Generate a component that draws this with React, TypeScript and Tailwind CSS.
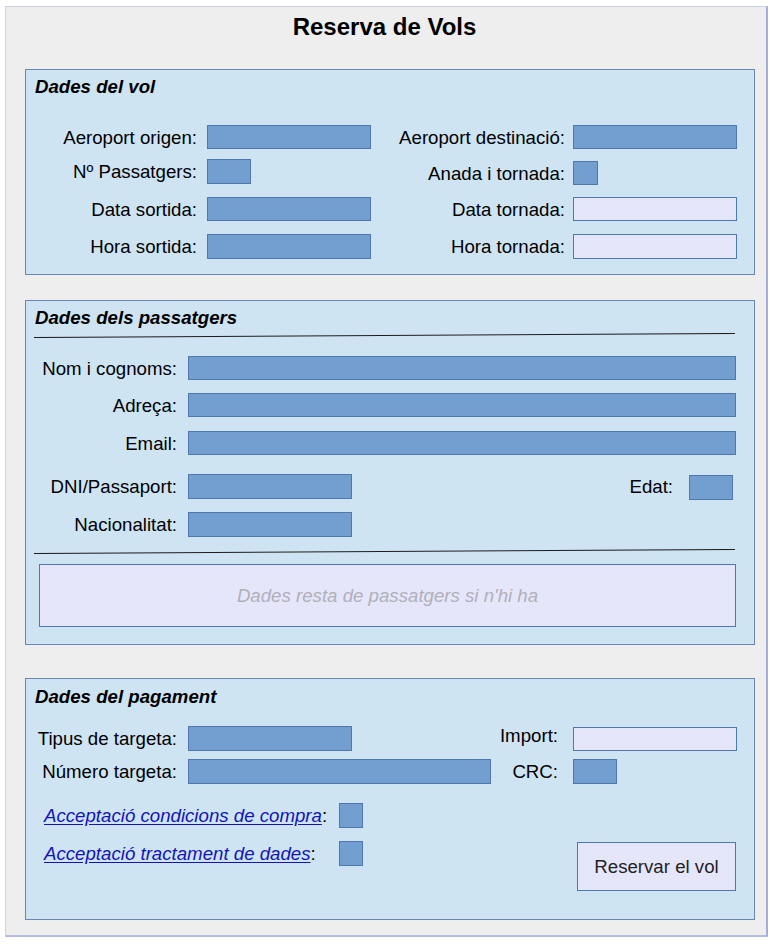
import React from 'react'

const Field = ({ w, h = 24, light = false }: { w: number; h?: number; light?: boolean }) => (
  <div
    className={`shrink-0 border border-[#4f77b0] ${light ? 'bg-[#e6e6fb]' : 'bg-[#729fcf]'}`}
    style={{ width: w, height: h }}
  />
)

const Rule = () => (
  <svg width="701" height="5" className="block ml-[8px]">
    <line x1="0" y1="4.5" x2="701" y2="0.5" stroke="#1e1e1e" strokeWidth="1.1" />
  </svg>
)

function App() {
  return (
    <div className="w-[771px] h-[946px] bg-white pt-[6px] pl-[5px] font-['Liberation_Sans',Arial,sans-serif] text-black text-[18.67px] leading-[21px]">
      <div className="w-[763px] h-[931px] bg-[#eeeeee] border-l border-t border-[#cdd2e3] border-r-2 border-b-2 border-r-[#a5aed8] border-b-[#b4bbdc] pl-[19px] pt-[6px]">
        <h1 className="w-[719px] text-center text-[24px] leading-[28px] font-bold">Reserva de Vols</h1>

        {/* dades del vol */}
        <div className="mt-[28px] w-[730px] h-[206px] bg-[#cfe4f3] border border-[#6a87b3] pt-[6px]">
          <h2 className="ml-[9px] font-bold italic">Dades del vol</h2>
          <div className="flex mt-[28px]">
            <div className="w-[345px] flex flex-col">
              <div className="flex items-center h-[24px]">
                <span className="w-[171px] text-right">Aeroport origen:</span>
                <div className="ml-[10px]"><Field w={164} /></div>
              </div>
              <div className="flex items-center h-[25px] mt-[10px]">
                <span className="w-[171px] text-right">Nº Passatgers:</span>
                <div className="ml-[10px]"><Field w={44} h={25} /></div>
              </div>
              <div className="flex items-center h-[24px] mt-[13px]">
                <span className="w-[171px] text-right">Data sortida:</span>
                <div className="ml-[10px]"><Field w={164} /></div>
              </div>
              <div className="flex items-center h-[25px] mt-[13px]">
                <span className="w-[171px] text-right">Hora sortida:</span>
                <div className="ml-[10px]"><Field w={164} h={25} /></div>
              </div>
            </div>
            <div className="flex flex-col">
              <div className="flex items-center h-[24px]">
                <span className="w-[194px] text-right">Aeroport destinació:</span>
                <div className="ml-[8px]"><Field w={164} /></div>
              </div>
              <div className="flex items-center h-[24px] mt-[12px]">
                <span className="w-[194px] text-right">Anada i tornada:</span>
                <div className="ml-[8px]"><Field w={25} /></div>
              </div>
              <div className="flex items-center h-[24px] mt-[12px]">
                <span className="w-[194px] text-right">Data tornada:</span>
                <div className="ml-[8px]"><Field w={164} light /></div>
              </div>
              <div className="flex items-center h-[25px] mt-[13px]">
                <span className="w-[194px] text-right">Hora tornada:</span>
                <div className="ml-[8px]"><Field w={164} h={25} light /></div>
              </div>
            </div>
          </div>
        </div>

        {/* dades dels passatgers */}
        <div className="mt-[25px] w-[730px] h-[345px] bg-[#cfe4f3] border border-[#6a87b3] pt-[6px]">
          <h2 className="ml-[9px] font-bold italic">Dades dels passatgers</h2>
          <div className="mt-[5px]"><Rule /></div>
          <div className="flex items-center h-[24px] mt-[18px]">
            <span className="w-[151px] text-right">Nom i cognoms:</span>
            <div className="ml-[11px]"><Field w={548} /></div>
          </div>
          <div className="flex items-center h-[24px] mt-[13px]">
            <span className="w-[151px] text-right">Adreça:</span>
            <div className="ml-[11px]"><Field w={548} /></div>
          </div>
          <div className="flex items-center h-[24px] mt-[14px]">
            <span className="w-[151px] text-right">Email:</span>
            <div className="ml-[11px]"><Field w={548} /></div>
          </div>
          <div className="flex items-center h-[25px] mt-[19px]">
            <span className="w-[151px] text-right">DNI/Passaport:</span>
            <div className="ml-[11px]"><Field w={164} h={25} /></div>
            <span className="w-[321px] text-right">Edat:</span>
            <div className="ml-[16px] mt-[2px]"><Field w={44} h={25} /></div>
          </div>
          <div className="flex items-center h-[25px] mt-[13px]">
            <span className="w-[151px] text-right">Nacionalitat:</span>
            <div className="ml-[11px]"><Field w={164} h={25} /></div>
          </div>
          <div className="mt-[12px]"><Rule /></div>
          <div className="mt-[10px] ml-[13px] w-[697px] h-[63px] bg-[#e6e6fb] border border-[#4f77b0] flex items-center justify-center italic text-[#b0b0ba]">
            Dades resta de passatgers si n'hi ha
          </div>
        </div>

        {/* dades del pagament */}
        <div className="mt-[33px] w-[730px] h-[242px] bg-[#cfe4f3] border border-[#6a87b3] pt-[7px]">
          <h2 className="ml-[9px] font-bold italic">Dades del pagament</h2>
          <div className="flex items-center h-[25px] mt-[19px]">
            <span className="w-[151px] text-right">Tipus de targeta:</span>
            <div className="ml-[11px]"><Field w={164} h={25} /></div>
            <span className="w-[206px] text-right -mt-[6px]">Import:</span>
            <div className="ml-[15px]"><Field w={164} light /></div>
          </div>
          <div className="flex items-center h-[25px] mt-[8px]">
            <span className="w-[151px] text-right">Número targeta:</span>
            <div className="ml-[11px]"><Field w={303} h={25} /></div>
            <span className="w-[67px] text-right">CRC:</span>
            <div className="ml-[15px]"><Field w={44} h={25} /></div>
          </div>
          <div className="flex mt-[19px]">
            <div className="flex flex-col ml-[18px]">
              <div className="flex items-center h-[25px]">
                <span className="w-[295px]">
                  <a href="#" className="italic text-[#1414b8] underline underline-offset-[2px]">Acceptació condicions de compra</a>:
                </span>
                <Field w={24} h={25} />
              </div>
              <div className="flex items-center h-[25px] mt-[13px]">
                <span className="w-[295px]">
                  <a href="#" className="italic text-[#1414b8] underline underline-offset-[2px]">Acceptació tractament de dades</a>:
                </span>
                <Field w={24} h={25} />
              </div>
            </div>
            <button className="ml-auto mr-[18px] mt-[39px] w-[159px] h-[49px] bg-[#e6e6fb] border border-[#4f77b0] text-[#222]">
              Reservar el vol
            </button>
          </div>
        </div>
      </div>
    </div>
  )
}

export default App
